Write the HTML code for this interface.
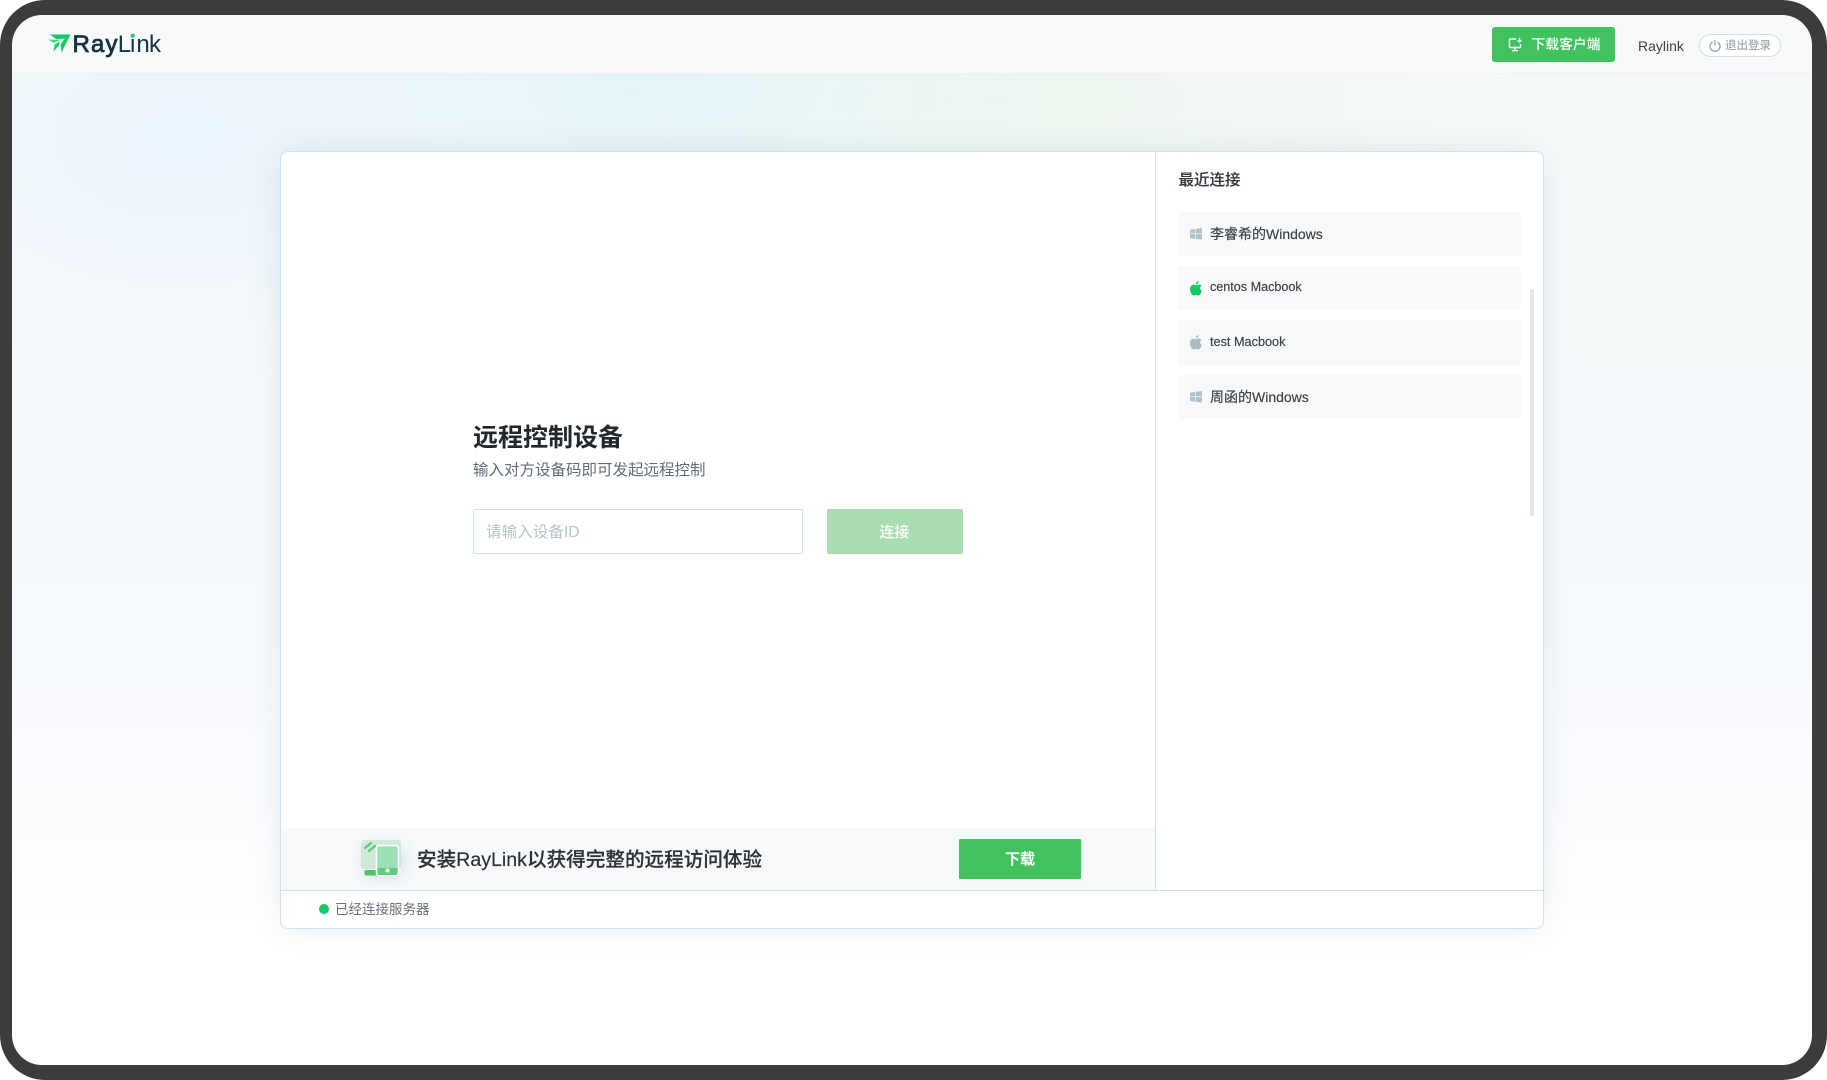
<!DOCTYPE html>
<html lang="zh-CN">
<head>
<meta charset="utf-8">
<title>RayLink</title>
<style>
html,body{margin:0;padding:0;width:1827px;height:1080px;overflow:hidden;background:#fff}
body{position:relative;font-family:"Liberation Sans","Noto Sans CJK SC",sans-serif;color:#2c343b}
.a{position:absolute;white-space:nowrap}
#corner{left:0;top:0;width:1827px;height:1080px;background:#fff;overflow:hidden}
#screen{left:12px;top:15px;width:1800px;height:1050px;border-radius:30px;overflow:hidden;
background:
radial-gradient(ellipse 400px 260px at 170px 120px,rgba(232,243,252,.9),rgba(232,243,252,0) 100%),
radial-gradient(ellipse 430px 170px at 620px 75px,rgba(226,244,249,.95),rgba(226,244,249,0) 100%),
radial-gradient(ellipse 560px 180px at 1000px 85px,rgba(236,245,238,.95),rgba(236,245,238,0) 100%),
linear-gradient(180deg,#f6f9f9 0,#f6f9fa 300px,#f6f9fd 620px,#fbfcfe 800px,#fff 920px)}
#header{left:0;top:0;width:1800px;height:58px;background:#f7f9fb;border-bottom:1px solid #eef1f3;box-sizing:content-box}
#card{left:280px;top:151px;width:1264px;height:778px;box-sizing:border-box;background:#fff;border:1px solid #cfe1ee;border-radius:8px;box-shadow:0 0 34px rgba(60,95,110,.1)}
.item{left:1178px;width:343px;background:#f7f9fb;border-radius:2px}
.lt{left:1210px;color:#383f47;-webkit-text-stroke:.15px #383f47}
</style>
</head>
<body>
<div class="a" id="corner">
  <div class="a" id="screen">
    <div class="a" id="header"></div>
  </div>
</div>
<!-- device frame -->
<svg class="a" style="left:0;top:0" width="1827" height="1080" viewBox="0 0 1827 1080">
  <path fill="#3c3c3c" fill-rule="evenodd" d="M45 0H1782A45 45 0 0 1 1827 45V1035A45 45 0 0 1 1782 1080H45A45 45 0 0 1 0 1035V45A45 45 0 0 1 45 0ZM42 15A30 30 0 0 0 12 45V1035A30 30 0 0 0 42 1065H1782A30 30 0 0 0 1812 1035V45A30 30 0 0 0 1782 15Z"/>
</svg>

<!-- logo -->
<svg class="a" style="left:46px;top:30px" width="120" height="32" viewBox="46 30 120 32">
  <path fill="#17c964" d="M50 34.500H70.500L61.500 52.500 60.600 44.500 65 38.400 56.500 39.400Z"/>
  <path fill="#3fdc85" d="M48 39.500 60 40 54 43Z"/>
  <path fill="#22cf6e" d="M54.500 44.500 60 41.200 58.600 46 53.500 51.500Z"/>
  <text x="72.500 91 105.500" y="52" font-family="'Liberation Sans',sans-serif" font-size="24" fill="#12343f" stroke="#12343f" stroke-width=".8">Ray</text>
  <text x="117.700 130 136.400 149" y="52" font-family="'Liberation Sans',sans-serif" font-size="24" fill="#12343f">Link</text>
  <circle cx="132.700" cy="35.700" r="2.100" fill="#17c964"/>
</svg>

<!-- header right -->
<div class="a" style="left:1492px;top:26.500px;width:123px;height:35px;background:#40c25f;border-radius:3px"></div>
<svg class="a" style="left:1508px;top:37px" width="15" height="15" viewBox="0 0 15 15" fill="none" stroke="#fff" stroke-width="1.400">
  <path d="M8 2H2.400A.9.9 0 0 0 1.500 2.900V9.600A.9.9 0 0 0 2.400 10.500H11.600A.9.9 0 0 0 12.500 9.600V7"/>
  <path d="M4 13.700H10M7 10.500V13.700"/>
  <path d="M11.500 .6V5M9.500 3.100 11.500 5 13.500 3.100" stroke-width="1.300"/>
</svg>
<div class="a" style="left:1531.500px;top:35px;line-height:20px;font-size:13.800px;color:#fff;font-weight:500">下载客户端</div>
<div class="a" style="left:1638px;top:36px;line-height:20px;font-size:14px;color:#3c4249">Raylink</div>
<div class="a" style="left:1699px;top:34px;width:82px;height:23px;box-sizing:border-box;border:1px solid #d2dee6;border-radius:12px;background:#fff"></div>
<svg class="a" style="left:1708px;top:39px" width="14" height="14" viewBox="0 0 14 14" fill="none" stroke="#8f9ea8" stroke-width="1.200" stroke-linecap="round">
  <path d="M4.100 3.200A5 5 0 1 0 9.900 3.200"/>
  <path d="M7 1.400V6.200"/>
</svg>
<div class="a" style="left:1725px;top:37px;line-height:18px;font-size:11.500px;color:#8b959d">退出登录</div>

<!-- card -->
<div class="a" id="card"></div>
<div class="a" style="left:281px;top:828px;width:874px;height:62px;background:#f7f9fb"></div>
<div class="a" style="left:1155px;top:152px;width:1px;height:738px;background:#d3e2ee"></div>
<div class="a" style="left:281px;top:890px;width:1262px;height:1px;background:#cfe1ee"></div>

<!-- main -->
<div class="a" style="left:473px;top:420.500px;line-height:34px;font-size:25px;font-weight:700;color:#20282e">远程控制设备</div>
<div class="a" style="left:473px;top:458.500px;line-height:24px;font-size:15.500px;color:#5f6d79">输入对方设备码即可发起远程控制</div>
<div class="a" style="left:472.500px;top:509px;width:330.500px;height:45px;box-sizing:border-box;border:1px solid #cfe1ee;border-radius:2px;background:#fff"></div>
<div class="a" style="left:486px;top:521px;line-height:23px;font-size:15.600px;color:#b4c7cb">请输入设备ID</div>
<div class="a" style="left:826.500px;top:509px;width:136px;height:45px;background:#a9deb0;border-radius:2px;color:#fff;font-size:15px;font-weight:500;text-align:center;line-height:47px">连接</div>

<!-- recent -->
<div class="a" style="left:1178.500px;top:169px;line-height:24px;font-size:15.500px;font-weight:500;color:#30373d;-webkit-text-stroke:.12px #30373d">最近连接</div>
<div class="a item" style="top:211.500px;height:44.500px"></div>
<div class="a item" style="top:265.500px;height:44.500px"></div>
<div class="a item" style="top:320px;height:45px"></div>
<div class="a item" style="top:375px;height:44px"></div>
<svg class="a" style="left:1190px;top:228px" width="12" height="12" viewBox="0 0 12 12" fill="#aec2c9"><path d="M0 1.700 5.300.9V5.400H0ZM6 .8 12 0V5.400H6ZM0 6.100H5.300V10.700L0 10ZM6 6.100H12V11.500L6 10.800Z"/></svg>
<svg class="a" style="left:1190px;top:391px" width="12" height="12" viewBox="0 0 12 12" fill="#aec2c9"><path d="M0 1.700 5.300.9V5.400H0ZM6 .8 12 0V5.400H6ZM0 6.100H5.300V10.700L0 10ZM6 6.100H12V11.500L6 10.800Z"/></svg>
<svg class="a" style="left:1190px;top:281px" width="12" height="15" viewBox="0 0 12 15" fill="#17c964"><path d="M8.600 0C8.700 1.700 7.300 3.200 5.900 3.300 5.700 1.800 7.100.2 8.600 0ZM6 4.200C6.800 4.200 7.600 3.500 8.900 3.500 9.900 3.500 10.900 4 11.500 4.900 9.400 6.100 9.800 9 12 9.900 11.200 11.900 9.900 14.500 8.300 14.500 7.300 14.500 7 13.900 5.900 13.900 4.800 13.900 4.400 14.500 3.500 14.500 1.900 14.500 0 11.300 0 8.300 0 5.300 1.800 3.600 3.600 3.600 4.700 3.600 5.400 4.200 6 4.200Z"/></svg>
<svg class="a" style="left:1190px;top:335px" width="12" height="15" viewBox="0 0 12 15" fill="#a9bcc3"><path d="M8.600 0C8.700 1.700 7.300 3.200 5.900 3.300 5.700 1.800 7.100.2 8.600 0ZM6 4.200C6.800 4.200 7.600 3.500 8.900 3.500 9.900 3.500 10.900 4 11.500 4.900 9.400 6.100 9.800 9 12 9.900 11.200 11.900 9.900 14.500 8.300 14.500 7.300 14.500 7 13.900 5.900 13.900 4.800 13.900 4.400 14.500 3.500 14.500 1.900 14.500 0 11.300 0 8.300 0 5.300 1.800 3.600 3.600 3.600 4.700 3.600 5.400 4.200 6 4.200Z"/></svg>
<div class="a lt" style="top:224px;line-height:20px;font-size:14px">李睿希的Windows</div>
<div class="a lt" style="top:277px;line-height:20px;font-size:12.600px">centos Macbook</div>
<div class="a lt" style="top:332px;line-height:20px;font-size:12.700px">test Macbook</div>
<div class="a lt" style="top:387px;line-height:20px;font-size:14px">周函的Windows</div>
<div class="a" style="left:1530px;top:289px;width:4px;height:227px;background:#dfe6f0;border-radius:2px"></div>

<!-- banner -->
<div class="a" style="left:367px;top:845px;width:34px;height:28px;box-shadow:0 3px 16px rgba(70,90,90,.22)"></div>
<svg class="a" style="left:358px;top:834px" width="50" height="46" viewBox="355 834 50 46">
  <defs><linearGradient id="g" x1="0" y1="0" x2="1" y2="1"><stop offset="0" stop-color="#d3ebdc"/><stop offset="1" stop-color="#c5e8d2"/></linearGradient></defs>
  <rect x="358" y="840" width="40" height="29" rx="3" fill="url(#g)"/>
  <rect x="361.500" y="870" width="20" height="5.500" rx="2" fill="#49c564"/>
  <path d="M362 848 368 843M366 851 372 846" stroke="#5cc87b" stroke-width="2.200" stroke-linecap="round"/>
  <rect x="373.500" y="845.500" width="22" height="30" rx="2.500" fill="#9ce0ba" stroke="#fff" stroke-width="1.600"/>
  <path d="M374.500 868H394.500V873A2 2 0 0 1 392.500 875H376.500A2 2 0 0 1 374.500 873Z" fill="#5ecb80"/>
  <circle cx="384.500" cy="870.500" r="2" fill="#fff"/>
</svg>
<div class="a" style="left:417px;top:844.500px;line-height:30px;font-size:19.600px;font-weight:500;color:#2b333a;-webkit-text-stroke:.2px #2b333a">安装RayLink以获得完整的远程访问体验</div>
<div class="a" style="left:959px;top:839px;width:122px;height:40px;background:#40c25f;border-radius:1px;color:#fff;font-size:15px;font-weight:500;-webkit-text-stroke:.3px #fff;text-align:center;line-height:42px">下载</div>

<!-- status -->
<div class="a" style="left:319px;top:904px;width:10px;height:10px;border-radius:50%;background:#17c76a"></div>
<div class="a" style="left:335px;top:900px;line-height:19px;font-size:13.500px;color:#66727e">已经连接服务器</div>
</body>
</html>
